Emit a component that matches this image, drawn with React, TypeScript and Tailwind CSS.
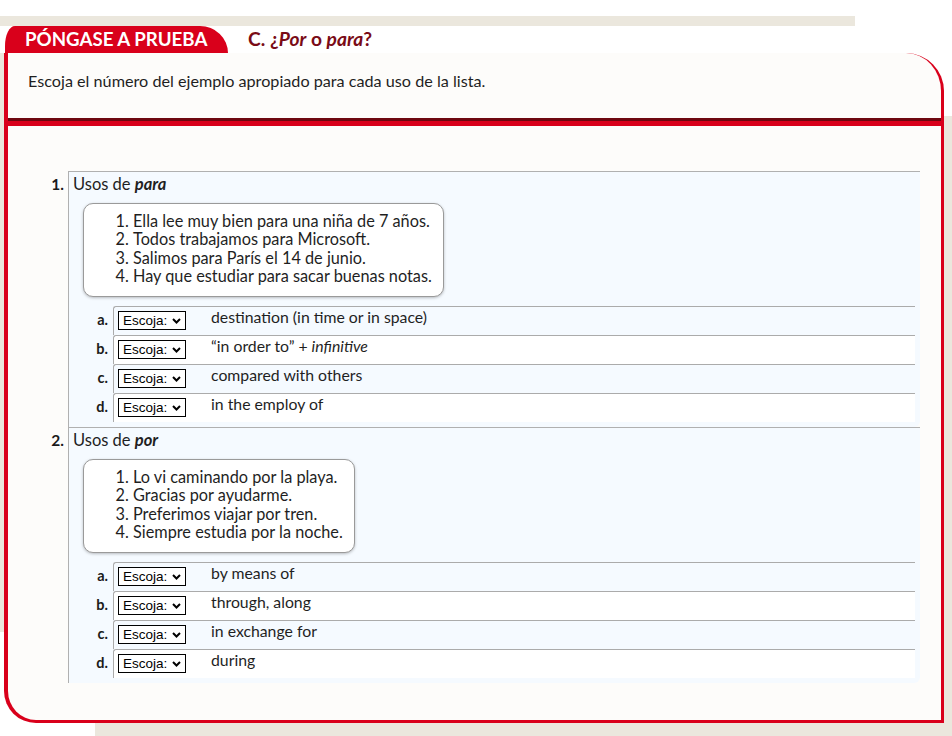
import React from "react";

const RED = "#d9001b";

type Row = { label: string; text: React.ReactNode; shade: boolean };

function Select() {
  return (
    <div className="flex h-[19px] w-[68px] items-center justify-between border border-black bg-white pl-[4px] pr-[4px] text-[13.5px] leading-none text-black [font-family:'Liberation_Sans',Arial,sans-serif]">
      <span>Escoja:</span>
      <svg width="9" height="6" viewBox="0 0 9 6" className="mt-[1px]">
        <path d="M1 1l3.5 3.5L8 1" fill="none" stroke="#000" strokeWidth="2" />
      </svg>
    </div>
  );
}

function Item({ num, word, examples, rows }: { num: string; word: string; examples: string[]; rows: Row[] }) {
  return (
    <div className="flex">
      <div className="w-[60px] shrink-0 pr-[4px] pt-[3px] text-right text-[15.5px] font-bold leading-[20px] text-[#1a1a1a]">{num}</div>
      <div className="flex-1 rounded-br-[6px] border-l border-t border-[#b0b0b0] bg-[#f5faff] pb-[5px]">
        <div className="h-[31px] pl-[4px] pt-[2px] text-[16.5px] leading-[20px] text-[#1f1f1f]">
          Usos de <b className="italic">{word}</b>
        </div>
        <div className="ml-[14px] w-fit rounded-[10px] border border-[#9a9a9a] bg-white pb-[11px] pl-[49px] pr-[11px] pt-[8px] shadow-[0_1px_3px_rgba(0,0,0,0.25)]">
          <ol className="list-decimal text-[16.3px] leading-[18.3px] text-[#1f1f1f]">
            {examples.map((e) => (
              <li key={e}>{e}</li>
            ))}
          </ol>
        </div>
        <div className="mt-[9px]">
          {rows.map((r) => (
            <div key={r.label} className="flex h-[29px]">
              <div className="w-[44px] shrink-0 pr-[5px] pt-[4px] text-right text-[14.5px] font-bold leading-[20px] text-[#1a1a1a]">{r.label}</div>
              <div
                className={
                  "mr-[5px] flex flex-1 items-start rounded-tl-[3px] border-l border-t border-[#ababab] pl-[4px] pt-[4px] " +
                  (r.shade ? "bg-[#f5faff]" : "bg-white")
                }
              >
                <Select />
                <div className="ml-[25px] mt-[-4px] text-[15.8px] leading-[20px] text-[#1f1f1f]">{r.text}</div>
              </div>
            </div>
          ))}
        </div>
      </div>
    </div>
  );
}

export default function App() {
  return (
    <div className="relative h-[736px] w-[952px] overflow-hidden bg-white [font-family:Lato,'Open_Sans',sans-serif]">
      {/* decorative beige backdrop */}
      <div className="absolute left-0 top-[53px] h-[579px] w-[4px] bg-[#ebe7dd]" />
      <div className="absolute right-0 top-[116px] h-[620px] w-[8px] bg-[#ebe7dd]" />
      <div className="absolute bottom-0 left-[95px] h-[14px] w-[857px] bg-[#ebe7dd]" />

      <div className="h-[16px]" />
      <div className="h-[10px] w-[855px] bg-[#ebe7dd]" />
      <div className="flex h-[27px] items-center">
        <div className="ml-[5px] flex h-[27px] w-[223px] items-center rounded-tl-[10px_20px] rounded-tr-[28px_27px] bg-[#d9001b] pb-[1px] pl-[20px] text-[18.7px] font-bold text-white">
          PÓNGASE A PRUEBA
        </div>
        <div className="ml-[20px] pb-[1px] text-[19.2px] font-bold text-[#7a0b16]">
          C. ¿<i>Por</i> o <i>para</i>?
        </div>
      </div>

      <div
        className="relative ml-[4px] w-[940px] rounded-bl-[32px] rounded-tr-[38px] border-b-[3px] border-l-[4px] border-r-[3px] bg-[#fdfcfa]"
        style={{ borderColor: RED }}
      >
        <div className="h-[65px] pl-[20px] pt-[18px] text-[16.2px] leading-[20px] text-[#1f1f1f]">
          Escoja el número del ejemplo apropiado para cada uso de la lista.
        </div>
        <div className="h-[8px] border-t-[3px] border-[#6e0710] bg-[#d9001b]" />
        <div className="pb-[37px] pr-[21px] pt-[45px]">
          <Item
            num="1."
            word="para"
            examples={[
              "Ella lee muy bien para una niña de 7 años.",
              "Todos trabajamos para Microsoft.",
              "Salimos para París el 14 de junio.",
              "Hay que estudiar para sacar buenas notas.",
            ]}
            rows={[
              { label: "a.", text: "destination (in time or in space)", shade: true },
              { label: "b.", text: <>“in order to” + <i>infinitive</i></>, shade: false },
              { label: "c.", text: "compared with others", shade: true },
              { label: "d.", text: "in the employ of", shade: false },
            ]}
          />
          <Item
            num="2."
            word="por"
            examples={[
              "Lo vi caminando por la playa.",
              "Gracias por ayudarme.",
              "Preferimos viajar por tren.",
              "Siempre estudia por la noche.",
            ]}
            rows={[
              { label: "a.", text: "by means of", shade: true },
              { label: "b.", text: "through, along", shade: false },
              { label: "c.", text: "in exchange for", shade: true },
              { label: "d.", text: "during", shade: false },
            ]}
          />
        </div>
      </div>
    </div>
  );
}
